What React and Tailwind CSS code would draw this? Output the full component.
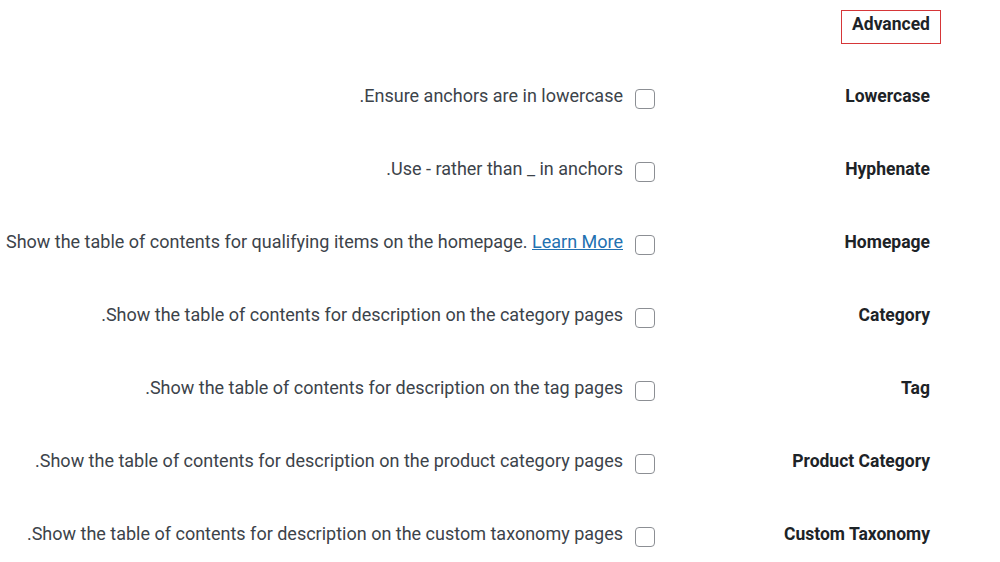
const rows = [
  { label: 'Lowercase', desc: 'Ensure anchors are in lowercase.' },
  { label: 'Hyphenate', desc: 'Use - rather than _ in anchors.' },
  { label: 'Homepage', desc: 'Show the table of contents for qualifying items on the homepage.', link: 'Learn More' },
  { label: 'Category', desc: 'Show the table of contents for description on the category pages.' },
  { label: 'Tag', desc: 'Show the table of contents for description on the tag pages.' },
  { label: 'Product Category', desc: 'Show the table of contents for description on the product category pages.' },
  { label: 'Custom Taxonomy', desc: 'Show the table of contents for description on the custom taxonomy pages.' },
]

export default function App() {
  return (
    <div
      dir="rtl"
      className="w-[1000px] h-[562px] bg-white overflow-hidden pr-[59px] text-[#1d2327]"
      style={{ fontFamily: 'Roboto, "Liberation Sans", sans-serif' }}
    >
      {/* heading */}
      <div className="pt-[10px] pb-[17px] flex">
        <div className="h-[34px] w-[100px] border border-[#d63638] flex items-start justify-center pt-[1px]">
          <h3 className="font-bold text-[17.5px] leading-[24px]">Advanced</h3>
        </div>
      </div>

      {rows.map((r) => (
        <div key={r.label} className="h-[73px] flex items-center">
          <div className="w-[286px] pr-[11px] mb-[4px] font-bold text-[17.5px] text-right leading-[24px]">{r.label}</div>
          <span className="w-[20px] h-[20px] mt-[3px] rounded-[4px] border border-[#8c8f94] bg-white shrink-0" />
          <p className="mr-[12px] mb-[4px] text-[18px] text-[#3c434a] leading-[24px] whitespace-nowrap">
            {r.desc}
            {r.link && (
              <>
                {' '}
                <a href="#" className="text-[#2271b1] underline">{r.link}</a>
              </>
            )}
          </p>
        </div>
      ))}
    </div>
  )
}
